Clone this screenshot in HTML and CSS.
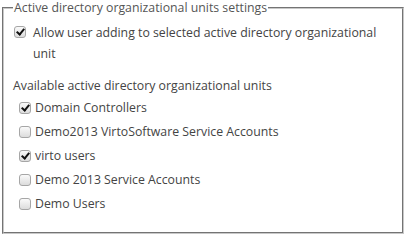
FILE: index.html
```html
<!DOCTYPE html>
<html lang="en">
<head>
    <meta charset="UTF-8">
    <title>AD organizational units settings</title>
    <link rel="stylesheet" href="styles.css">
</head>
<body>
    <fieldset class="ad-settings">
        <legend>Active directory organizational units settings</legend>

        <label class="allow-option">
            <input type="checkbox" class="check" checked>
            <span>Allow user adding to selected active directory organizational unit</span>
        </label>

        <div class="section-title">Available active directory organizational units</div>

        <ul class="ou-list">
            <li><label><input type="checkbox" class="check" checked> Domain Controllers</label></li>
            <li><label><input type="checkbox" class="check"> Demo2013 VirtoSoftware Service Accounts</label></li>
            <li><label><input type="checkbox" class="check" checked> virto users</label></li>
            <li><label><input type="checkbox" class="check"> Demo 2013 Service Accounts</label></li>
            <li><label><input type="checkbox" class="check"> Demo Users</label></li>
        </ul>
    </fieldset>
</body>
</html>
```

FILE: styles.css
```css
* {
    margin: 0;
    padding: 0;
    box-sizing: border-box;
    font-family: 'Open Sans', 'Noto Sans', sans-serif;
}

body {
    background-color: white;
    color: #444;
    font-size: 12.3px;
}

.ad-settings {
    margin: 0 2px;
    height: 234px;
    border: 2px groove #c8c8c8;
    padding: 0 10px 0 9px;
}

.ad-settings legend {
    padding: 0 1px;
    line-height: 16px;
    color: #555;
}

.allow-option {
    display: flex;
    align-items: flex-start;
    margin-top: 6px;
    line-height: 21px;
}

.allow-option span {
    padding-left: 7px;
}

.allow-option .check {
    margin-top: 4px;
    margin-left: 1px;
}

.section-title {
    margin-top: 11px;
    line-height: 21px;
}

.ou-list {
    list-style: none;
    margin-top: 0;
    padding-left: 6px;
}

.ou-list li {
    line-height: 24px;
    height: 24px;
}

.ou-list label {
    display: flex;
    align-items: center;
    gap: 4px;
}

.check {
    appearance: none;
    -webkit-appearance: none;
    width: 12px;
    height: 12px;
    flex: none;
    border: 1px solid #a6a6a6;
    border-radius: 3px;
    background: linear-gradient(#fafafa, #dcdcdc);
    position: relative;
}

.check:checked::after {
    content: "";
    position: absolute;
    left: 3px;
    top: 0;
    width: 3px;
    height: 6px;
    border: solid #111;
    border-width: 0 2px 2px 0;
    transform: rotate(40deg);
}
```
